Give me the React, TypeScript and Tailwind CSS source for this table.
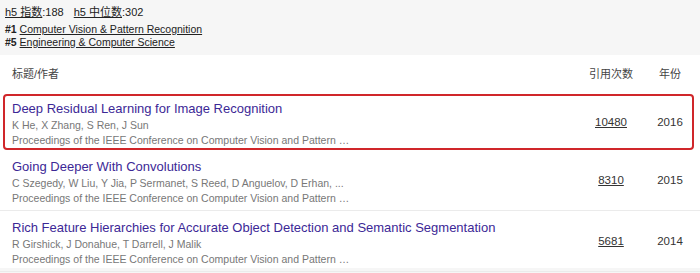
import React from "react";

const rows = [
  {
    title: "Deep Residual Learning for Image Recognition",
    authors: "K He, X Zhang, S Ren, J Sun",
    venue: "Proceedings of the IEEE Conference on Computer Vision and Pattern …",
    cites: "10480",
    year: "2016",
    hl: true,
  },
  {
    title: "Going Deeper With Convolutions",
    authors: "C Szegedy, W Liu, Y Jia, P Sermanet, S Reed, D Anguelov, D Erhan, ...",
    venue: "Proceedings of the IEEE Conference on Computer Vision and Pattern …",
    cites: "8310",
    year: "2015",
    hl: false,
  },
  {
    title: "Rich Feature Hierarchies for Accurate Object Detection and Semantic Segmentation",
    authors: "R Girshick, J Donahue, T Darrell, J Malik",
    venue: "Proceedings of the IEEE Conference on Computer Vision and Pattern …",
    cites: "5681",
    year: "2014",
    hl: false,
  },
];

function Row({ r }: { r: (typeof rows)[number] }) {
  const inner = (
    <>
      <div className="flex-1 min-w-0">
        <div className="text-[13px] leading-[18px] text-[#3c2896] whitespace-nowrap">{r.title}</div>
        <div className="text-[10.5px] leading-[15px] text-[#777] whitespace-nowrap">{r.authors}</div>
        <div className="text-[10.5px] leading-[14px] text-[#777] whitespace-nowrap">{r.venue}</div>
      </div>
      <div className="w-[60px] mr-[7px] text-center text-[11.5px] text-[#333] underline">{r.cites}</div>
      <div className="w-[44px] text-center text-[11.5px] text-[#333]">{r.year}</div>
    </>
  );
  if (r.hl) {
    return (
      <div className="ml-[3px] mr-[6px] mt-[2px] h-[56px] border-2 border-[#d0262a] rounded-[4px] flex items-center pl-[7px] pt-[2px]">
        {inner}
      </div>
    );
  }
  return (
    <div className="h-[61px] border-b border-[#ebebeb] flex items-center pl-[12px] pr-[8px] pt-[2px]">{inner}</div>
  );
}

export default function App() {
  return (
    <div
      className="w-[700px] h-[273px] bg-[#f6f6f6] overflow-hidden"
      style={{ fontFamily: '"Liberation Sans", Arial, "Noto Sans CJK SC", sans-serif' }}
    >
      <div className="pl-[5px] pt-[4px] h-[55px] text-[#222]">
        <div className="text-[11px] leading-[16px] flex gap-[10px]">
          <span>
            <span className="underline">h5 指数</span>:188
          </span>
          <span>
            <span className="underline">h5 中位数</span>:302
          </span>
        </div>
        <div className="mt-[3px] text-[10.5px] leading-[13px]">
          <span className="font-bold">#1</span> <span className="underline">Computer Vision &amp; Pattern Recognition</span>
        </div>
        <div className="text-[10.5px] leading-[13px]">
          <span className="font-bold">#5</span> <span className="underline">Engineering &amp; Computer Science</span>
        </div>
      </div>
      <div className="bg-white h-[213px]">
        <div className="h-[37px] flex items-center pl-[12px] pr-[8px] text-[11px] text-[#444] pt-[1px]">
          <div className="flex-1">标题/作者</div>
          <div className="w-[60px] mr-[7px] text-center">引用次数</div>
          <div className="w-[44px] text-center">年份</div>
        </div>
        {rows.map((r) => (
          <Row key={r.title} r={r} />
        ))}
      </div>
    </div>
  );
}
